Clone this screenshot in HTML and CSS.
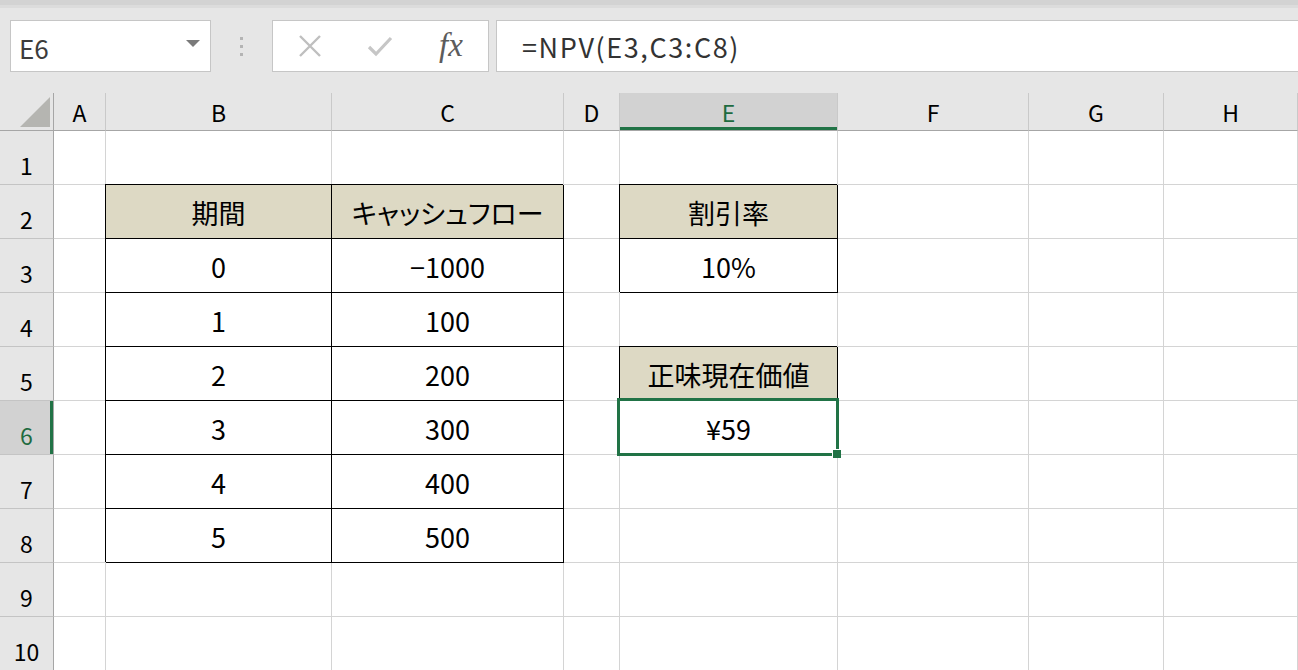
FILE: index.html
```html
<!DOCTYPE html>
<html lang="ja">

<head>
    <meta charset="UTF-8">
    <title>NPV</title>
    <link rel="stylesheet" href="styles.css">
</head>

<body>
    <div class="topstrip"></div>

    <div class="toolbar">
        <div class="namebox">
            <span class="cellref">E6</span>
            <span class="dropdown"></span>
        </div>
        <div class="grip">
            <span></span><span></span><span></span>
        </div>
        <div class="buttons">
            <svg class="btn" width="26" height="26" viewBox="0 0 26 26">
                <path d="M3 3 L23 23 M23 3 L3 23" stroke="#bfbfbf" stroke-width="2.4" fill="none" />
            </svg>
            <svg class="btn" width="26" height="26" viewBox="0 0 26 26">
                <path d="M2 14 L9 21 L24 5" stroke="#c6c6c6" stroke-width="3.2" fill="none" />
            </svg>
            <span class="fx">fx</span>
        </div>
        <div class="formula">
            <span class="formula_text">=NPV(E3,C3:C8)</span>
        </div>
    </div>

    <div class="sheet">
        <!-- column headers -->
        <div class="corner"><span class="corner_tri"></span></div>
        <div class="ch">A</div>
        <div class="ch">B</div>
        <div class="ch">C</div>
        <div class="ch">D</div>
        <div class="ch active">E</div>
        <div class="ch">F</div>
        <div class="ch">G</div>
        <div class="ch">H</div>

        <!-- row 1 -->
        <div class="rh">1</div>
        <div class="c"></div><div class="c"></div><div class="c"></div><div class="c"></div>
        <div class="c"></div><div class="c"></div><div class="c"></div><div class="c"></div>

        <!-- row 2 -->
        <div class="rh">2</div>
        <div class="c"></div>
        <div class="c tb hd">期間</div>
        <div class="c tb hd">キャッシュフロー</div>
        <div class="c"></div>
        <div class="c tb hd">割引率</div>
        <div class="c"></div><div class="c"></div><div class="c"></div>

        <!-- row 3 -->
        <div class="rh">3</div>
        <div class="c"></div>
        <div class="c tb">0</div>
        <div class="c tb">−1000</div>
        <div class="c"></div>
        <div class="c tb">10%</div>
        <div class="c"></div><div class="c"></div><div class="c"></div>

        <!-- row 4 -->
        <div class="rh">4</div>
        <div class="c"></div>
        <div class="c tb">1</div>
        <div class="c tb">100</div>
        <div class="c"></div><div class="c"></div>
        <div class="c"></div><div class="c"></div><div class="c"></div>

        <!-- row 5 -->
        <div class="rh">5</div>
        <div class="c"></div>
        <div class="c tb">2</div>
        <div class="c tb">200</div>
        <div class="c"></div>
        <div class="c tb hd">正味現在価値</div>
        <div class="c"></div><div class="c"></div><div class="c"></div>

        <!-- row 6 -->
        <div class="rh active">6</div>
        <div class="c"></div>
        <div class="c tb">3</div>
        <div class="c tb">300</div>
        <div class="c"></div>
        <div class="c tb sel">¥59<span class="handle"></span></div>
        <div class="c"></div><div class="c"></div><div class="c"></div>

        <!-- row 7 -->
        <div class="rh">7</div>
        <div class="c"></div>
        <div class="c tb">4</div>
        <div class="c tb">400</div>
        <div class="c"></div><div class="c"></div>
        <div class="c"></div><div class="c"></div><div class="c"></div>

        <!-- row 8 -->
        <div class="rh">8</div>
        <div class="c"></div>
        <div class="c tb">5</div>
        <div class="c tb">500</div>
        <div class="c"></div><div class="c"></div>
        <div class="c"></div><div class="c"></div><div class="c"></div>

        <!-- row 9 -->
        <div class="rh">9</div>
        <div class="c"></div><div class="c"></div><div class="c"></div><div class="c"></div>
        <div class="c"></div><div class="c"></div><div class="c"></div><div class="c"></div>

        <!-- row 10 -->
        <div class="rh">10</div>
        <div class="c"></div><div class="c"></div><div class="c"></div><div class="c"></div>
        <div class="c"></div><div class="c"></div><div class="c"></div><div class="c"></div>
    </div>
</body>

</html>
```

FILE: styles.css
```css
body {
    margin: 0;
    width: 1298px;
    height: 670px;
    overflow: hidden;
    background: #e6e6e6;
    font-family: "Noto Sans CJK JP", "Noto Sans", sans-serif;
    color: #000;
}

.topstrip {
    height: 8px;
    background: linear-gradient(#d3d3d3 0, #d3d3d3 5px, #dcdcdc 5px, #dcdcdc 8px);
}

/* name box + formula bar */
.toolbar {
    display: flex;
    align-items: stretch;
    height: 52px;
    padding: 12px 0 0 10px;
    margin-bottom: 21px;
}

.namebox {
    box-sizing: border-box;
    width: 201px;
    background: #fff;
    border: 1px solid #c6c6c6;
    display: flex;
    align-items: center;
    justify-content: space-between;
    padding: 0 10px 0 8px;
}

.cellref {
    font-size: 26px;
    color: #3c3c3c;
    line-height: 1;
    margin-top: 4px;
}

.dropdown {
    width: 0;
    height: 0;
    border-left: 7px solid transparent;
    border-right: 7px solid transparent;
    border-top: 7px solid #7a7a7a;
    margin-bottom: 6px;
}

.grip {
    width: 61px;
    display: flex;
    flex-direction: column;
    align-items: center;
    justify-content: center;
    gap: 5px;
}

.grip span {
    width: 3px;
    height: 3px;
    background: #b4b4b4;
}

.buttons {
    box-sizing: border-box;
    width: 217px;
    background: #fff;
    border: 1px solid #c6c6c6;
    display: flex;
    align-items: center;
    padding-left: 24px;
    gap: 44px;
}

.fx {
    font-family: "Liberation Serif", serif;
    font-style: italic;
    font-size: 33px;
    line-height: 1;
    color: #5c5c5c;
    margin-left: 2px;
    margin-top: -2px;
}

.formula {
    flex: 1;
    margin-left: 7px;
    margin-right: -2px;
    background: #fff;
    border: 1px solid #c6c6c6;
    display: flex;
    align-items: center;
    padding-left: 25px;
}

.formula_text {
    font-size: 27px;
    letter-spacing: 1.6px;
    color: #333;
    margin-top: 1px;
}

/* worksheet */
.sheet {
    display: grid;
    grid-template-columns: 54px 52px 226px 232px 56px 218px 191px 135px 134px;
    grid-template-rows: 38px repeat(10, 54px);
    background: #fff;
}

.corner,
.ch,
.rh {
    box-sizing: border-box;
    background: #e6e6e6;
    display: flex;
    justify-content: center;
    align-items: flex-end;
}

.corner {
    border-right: 1px solid #a6a6a6;
    border-bottom: 1px solid #a6a6a6;
    position: relative;
}

.corner_tri {
    position: absolute;
    right: 3px;
    bottom: 3px;
    width: 0;
    height: 0;
    border-left: 30px solid transparent;
    border-bottom: 30px solid #b5b5b1;
}

.ch {
    font-size: 23px;
    border-right: 1px solid #c9c9c9;
    border-bottom: 1px solid #a6a6a6;
    padding-bottom: 6px;
    line-height: 1;
}

.ch.active {
    background: #d2d2d2;
    color: #1e6b40;
    box-shadow: inset 0 -3px 0 #217346;
}

.rh {
    font-size: 23px;
    border-right: 1px solid #a6a6a6;
    border-bottom: 1px solid #c4c4c4;
    padding-bottom: 7px;
    line-height: 1;
}

.rh.active {
    background: #d2d2d2;
    color: #1e6b40;
    box-shadow: inset -3px 0 0 #217346;
}

.c {
    box-sizing: border-box;
    border-right: 1px solid #d4d4d4;
    border-bottom: 1px solid #d4d4d4;
    display: flex;
    align-items: center;
    justify-content: center;
    font-size: 27px;
    padding-top: 2px;
    white-space: nowrap;
}

/* bordered table cells */
.tb {
    border-color: #000;
    box-shadow: -1px -1px 0 #000;
}

.hd {
    background: #ddd9c4;
    font-feature-settings: "palt";
    padding-top: 1px;
}

.sel {
    position: relative;
}

.sel::after {
    content: "";
    position: absolute;
    top: -3px;
    left: -3px;
    right: -2px;
    bottom: -2px;
    border: 3px solid #217346;
}

.handle {
    position: absolute;
    right: -4px;
    bottom: -4px;
    width: 8px;
    height: 8px;
    background: #217346;
    border: 1px solid #fff;
    border-width: 1px 0 0 1px;
    z-index: 1;
}
```
